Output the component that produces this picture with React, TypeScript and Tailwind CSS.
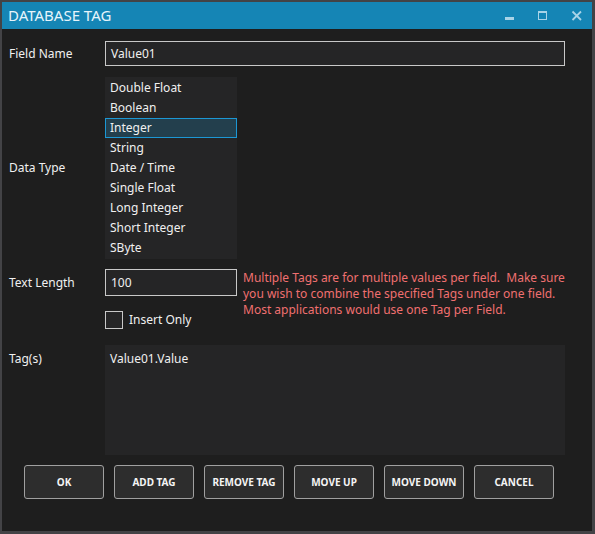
import React from "react";

const types = [
  "Double Float",
  "Boolean",
  "Integer",
  "String",
  "Date / Time",
  "Single Float",
  "Long Integer",
  "Short Integer",
  "SByte",
];

const buttons = ["OK", "ADD TAG", "REMOVE TAG", "MOVE UP", "MOVE DOWN", "CANCEL"];

export default function App() {
  return (
    <div
      className="w-[595px] h-[534px] bg-[#434346] pt-[2px] pl-[2px]"
      style={{ fontFamily: '"Noto Sans", "Open Sans", sans-serif' }}
    >
      <div className="w-[590px] h-[529px] bg-[#1e1e1e] flex flex-col text-[#f0f0f0]">
        {/* Title bar */}
        <div className="h-[27px] bg-[#1585b5] flex items-center pl-[6px] shrink-0">
          <div className="text-[15px] text-[#e6f4fb] leading-none tracking-[0px]">DATABASE TAG</div>
          <div className="ml-auto flex items-center h-full">
            <svg width="12" height="12" viewBox="0 0 12 12" className="mr-[21px]">
              <rect x="1" y="7" width="9" height="3" fill="#a9d3e7" />
            </svg>
            <svg width="12" height="12" viewBox="0 0 12 12" className="mr-[22px]">
              <rect x="1.5" y="1.5" width="8" height="8" fill="none" stroke="#a9d3e7" strokeWidth="1" />
              <rect x="1" y="1" width="9" height="2" fill="#a9d3e7" />
            </svg>
            <svg width="12" height="12" viewBox="0 0 12 12" className="mr-[9px]">
              <path d="M1.5 1.5 L10 10 M10 1.5 L1.5 10" stroke="#a9d3e7" strokeWidth="1.8" />
            </svg>
          </div>
        </div>

        {/* Body */}
        <div className="flex flex-col pl-[7px] pr-[27px] pt-[12px] text-[12px]">
          {/* Field name */}
          <div className="flex items-center">
            <div className="w-[96px]">Field Name</div>
            <div className="flex-1 h-[25px] border border-[#c8c8c8] bg-[#252526] flex items-center pl-[5px]">
              Value01
            </div>
          </div>

          {/* Data type */}
          <div className="flex items-center mt-[11px]">
            <div className="w-[96px]">Data Type</div>
            <div className="w-[132px] bg-[#252526] py-[1px]">
              {types.map((t) =>
                t === "Integer" ? (
                  <div
                    key={t}
                    className="h-[20px] flex items-center pl-[4px] border border-[#1c97d4] bg-[#233f4d]"
                  >
                    {t}
                  </div>
                ) : (
                  <div key={t} className="h-[20px] flex items-center pl-[5px]">
                    {t}
                  </div>
                )
              )}
            </div>
          </div>

          {/* Text length */}
          <div className="flex items-start mt-[10px]">
            <div className="w-[96px] h-[27px] flex items-center">Text Length</div>
            <div className="w-[132px] h-[27px] border border-[#c8c8c8] bg-[#252526] flex items-center pl-[5px]">
              100
            </div>
            <div className="ml-[6px] mt-[1px] text-[#f07070] leading-[16px] whitespace-pre">
              {"Multiple Tags are for multiple values per field.  Make sure\nyou wish to combine the specified Tags under one field.\nMost applications would use one Tag per Field."}
            </div>
          </div>

          {/* Insert only */}
          <div className="flex items-center -mt-[7px] pl-[96px]">
            <div className="w-[18px] h-[18px] border border-[#c8c8c8] bg-[#252526]" />
            <div className="ml-[6px]">Insert Only</div>
          </div>

          {/* Tags */}
          <div className="flex mt-[16px]">
            <div className="w-[96px] pt-[5px]">Tag(s)</div>
            <div className="flex-1 h-[110px] bg-[#252526] pl-[5px] pt-[5px]">Value01.Value</div>
          </div>
        </div>

        {/* Buttons */}
        <div className="flex gap-[10px] pl-[22px] mt-[10px]">
          {buttons.map((b) => (
            <div
              key={b}
              className="w-[80px] h-[34px] border border-[#a0a0a0] rounded-[3px] bg-[#2d2d2d] flex items-center justify-center text-[10px] font-bold text-[#f4f4f4]"
            >
              {b}
            </div>
          ))}
        </div>
      </div>
    </div>
  );
}
